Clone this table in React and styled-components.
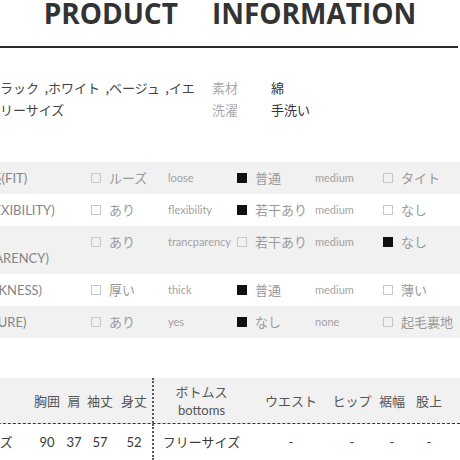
import React from 'react'
import styled, { createGlobalStyle } from 'styled-components'

const GlobalStyle = createGlobalStyle`
  body {
    margin: 0;
    background: #fff;
    font-family: "Noto Sans CJK JP", sans-serif;
  }
`

const Page = styled.div`
  width: 460px;
  height: 460px;
  overflow: hidden;
`

const Title = styled.h1`
  margin: 0;
  display: flex;
  justify-content: center;
  gap: 34px;
  font-family: "Open Sans", sans-serif;
  font-weight: 700;
  font-size: 28px;
  line-height: 26px;
  color: #333;
`

const Rule = styled.div`
  height: 2px;
  margin: 20px 2px 0 0;
  background: #2b2b2b;
`

const Info = styled.div`
  display: grid;
  grid-template-columns: 225px 59px 1fr;
  margin: 29px 0 0 -13px;
  font-size: 13px;
  line-height: 22px;
`

const InfoValue = styled.div`
  color: ${p => (p.clip ? '#444' : '#333')};
  white-space: nowrap;
  overflow: hidden;
  word-spacing: ${p => (p.clip ? 2.5 : 0)}px;
  margin-right: ${p => (p.clip ? 12 : 0)}px;
`

const InfoLabel = styled.div`
  color: #aaa;
`

const Attr = styled.div`
  margin-top: 41px;
`

const AttrRow = styled.div`
  display: grid;
  grid-template-columns: 91px 77px 69px 78px 68px 1fr;
  align-items: start;
  padding: 8px 0;
  line-height: 16px;
  background: ${p => (p.shade ? '#f1f1f1' : '#fff')};
`

const Label = styled.div`
  margin-left: ${p => -52 + p.dx}px;
  width: ${p => 143 - p.dx}px;
  white-space: pre;
  overflow: hidden;
  font-family: "Lato", "Noto Sans CJK JP", sans-serif;
  font-size: 13px;
  color: #858585;
`

const Choice = styled.div`
  display: flex;
  align-items: center;
  gap: 8px;
  white-space: nowrap;
  font-size: 13px;
  color: #9a9a9a;
`

const Box = styled.span`
  width: 10px;
  height: 10px;
  box-sizing: border-box;
  flex: none;
  border: 1px solid ${p => (p.on ? '#111' : '#c8c8c8')};
  background: ${p => (p.on ? '#111' : 'transparent')};
`

const En = styled.div`
  font-family: "Lato", sans-serif;
  font-size: 11px;
  color: #a3a3a3;
  white-space: nowrap;
`

const SizeTable = styled.div`
  margin: 40px 0 0 -62px;
`

const SizeRow = styled.div`
  display: flex;
  height: ${p => (p.head ? 45 : 36)}px;
  background: ${p => (p.head ? '#f1f1f1' : '#fff')};
  border-bottom: ${p => (p.head ? '1px dashed #333' : 'none')};
  color: ${p => (p.head ? '#555' : '#3a3a3a')};
`

const SizeCell = styled.div`
  flex: none;
  width: ${p => p.w}px;
  box-sizing: border-box;
  padding-right: ${p => p.pr || 0}px;
  border-left: ${p => (p.split ? '2px dotted #555' : 'none')};
  display: flex;
  flex-direction: column;
  justify-content: center;
  align-items: center;
  white-space: nowrap;
  font-family: "Lato", "Noto Sans CJK JP", sans-serif;
  font-size: 13px;
  line-height: 18px;
`

const attrs = [
  { label: 'サイズ感(FIT)', dx: 2, shade: true, items: [['ルーズ', 'loose'], ['普通', 'medium'], ['タイト']], on: 1 },
  { label: '伸縮(FLEXIBILITY)', dx: 2, items: [['あり', 'flexibility'], ['若干あり', 'medium'], ['なし']], on: 1 },
  { label: '透け感\n(TRANSPARENCY)', dx: -6, shade: true, items: [['あり', 'trancparency'], ['若干あり', 'medium'], ['なし']], on: 2 },
  { label: '厚み(THICKNESS)', dx: -9, items: [['厚い', 'thick'], ['普通', 'medium'], ['薄い']], on: 1 },
  { label: '質感(TEXTURE)', dx: -11, shade: true, items: [['あり', 'yes'], ['なし', 'none'], ['起毛裏地']], on: 1 },
]

const cols = [
  { w: 92, pr: 20, head: ['トップス', 'tops'], val: 'フリーサイズ' },
  { w: 34, head: ['胸囲'], val: '90' },
  { w: 20, head: ['肩'], val: '37' },
  { w: 32, head: ['袖丈'], val: '57' },
  { w: 36, head: ['身丈'], val: '52' },
  { w: 97, split: true, head: ['ボトムス', 'bottoms'], val: 'フリーサイズ' },
  { w: 84, head: ['ウエスト'], val: '-' },
  { w: 38, head: ['ヒップ'], val: '-' },
  { w: 42, head: ['裾幅'], val: '-' },
  { w: 32, head: ['股上'], val: '-' },
  { w: 58, head: ['股下'], val: '-' },
]

export default function App() {
  return (
    <Page>
      <GlobalStyle />
      <Title>
        <span>PRODUCT</span>
        <span>INFORMATION</span>
      </Title>
      <Rule />

      <Info>
        <InfoValue clip>ブラック ,ホワイト ,ベージュ ,イエ</InfoValue>
        <InfoLabel>素材</InfoLabel>
        <InfoValue>綿</InfoValue>
        <InfoValue clip>フリーサイズ</InfoValue>
        <InfoLabel>洗濯</InfoLabel>
        <InfoValue>手洗い</InfoValue>
      </Info>

      <Attr>
        {attrs.map(row => (
          <AttrRow key={row.label} shade={row.shade}>
            <Label dx={row.dx}>{row.label}</Label>
            {row.items.map((it, i) => (
              <React.Fragment key={i}>
                <Choice>
                  <Box on={i === row.on} />
                  {it[0]}
                </Choice>
                {it[1] && <En>{it[1]}</En>}
              </React.Fragment>
            ))}
          </AttrRow>
        ))}
      </Attr>

      <SizeTable>
        <SizeRow head>
          {cols.map((c, i) => (
            <SizeCell key={i} w={c.w} pr={c.pr} split={c.split}>
              {c.head.map(t => <span key={t}>{t}</span>)}
            </SizeCell>
          ))}
        </SizeRow>
        <SizeRow>
          {cols.map((c, i) => (
            <SizeCell key={i} w={c.w} pr={c.pr} split={c.split}>
              {c.val}
            </SizeCell>
          ))}
        </SizeRow>
      </SizeTable>
    </Page>
  )
}
